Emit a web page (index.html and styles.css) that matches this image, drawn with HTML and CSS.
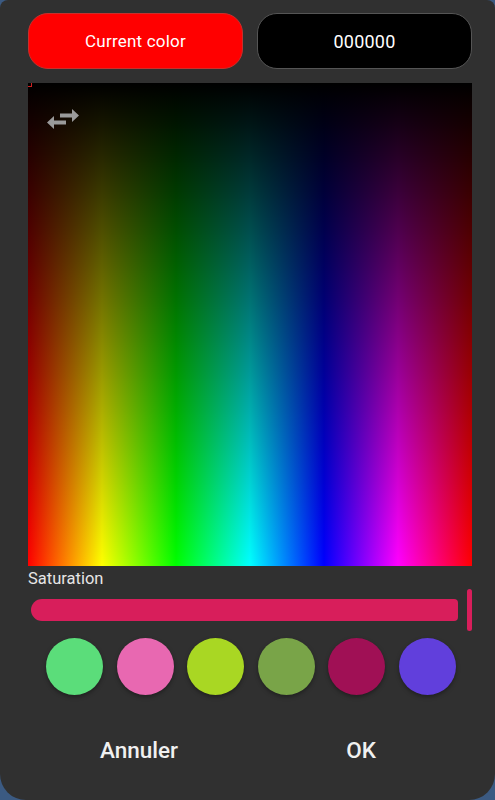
FILE: index.html
```html
<!DOCTYPE html>
<html lang="en">
<head>
    <meta charset="UTF-8">
    <meta name="viewport" content="width=device-width, initial-scale=1.0">
    <title>Color picker</title>
    <link rel="stylesheet" href="styles.css">
</head>
<body>
    <div class="dialog">
        <div class="top-row">
            <button class="chip chip-current">Current color</button>
            <button class="chip chip-hex">000000</button>
        </div>

        <div class="picker">
            <span class="picker-marker"></span>
            <svg class="swap-icon" width="34" height="28" viewBox="0 0 34 28">
                <path d="M14 8.5h12V4l7 6.5-7 6.5v-4.5H14z" fill="#9a9a9a"/>
                <path d="M20 15.5H8V11l-7 6.5 7 6.5v-4.5h12z" fill="#9a9a9a"/>
            </svg>
        </div>

        <span class="slider-label">Saturation</span>
        <div class="slider">
            <div class="slider-track"></div>
            <div class="slider-thumb"></div>
        </div>

        <div class="swatches">
            <span class="swatch swatch-1"></span>
            <span class="swatch swatch-2"></span>
            <span class="swatch swatch-3"></span>
            <span class="swatch swatch-4"></span>
            <span class="swatch swatch-5"></span>
            <span class="swatch swatch-6"></span>
        </div>

        <div class="actions">
            <button class="action">Annuler</button>
            <button class="action">OK</button>
        </div>
    </div>
</body>
</html>
```

FILE: styles.css
```css
/* ===== BASE ===== */
* {
    margin: 0;
    padding: 0;
    box-sizing: border-box;
}

body {
    font-family: Roboto, 'Noto Sans', sans-serif;
    background: #3b5a82;
    color: #f2f2f2;
}

button {
    font-family: inherit;
    border: none;
    background: none;
    color: inherit;
    cursor: pointer;
}

/* ===== DIALOG ===== */
.dialog {
    height: 800px;
    background: #303030;
    border-radius: 8px 8px 26px 26px;
    padding: 13px 23px 0 28px;
    display: flex;
    flex-direction: column;
}

.top-row {
    display: flex;
    gap: 14px;
}

.chip {
    flex: 1;
    height: 56px;
    border-radius: 20px;
    font-size: 17px;
    letter-spacing: 0.2px;
    color: #fff;
}

.chip-current {
    background: #ff0000;
    border: 1px solid #c8302c;
}

.chip-hex {
    background: #000;
    border: 1px solid #555;
    font-size: 18px;
}

/* ===== HUE / VALUE PLANE ===== */
.picker {
    position: relative;
    margin-top: 14px;
    height: 483px;
    background:
        linear-gradient(to bottom, #000 0%, rgba(0, 0, 0, 0) 100%),
        linear-gradient(to right, #f00 0%, #ff0 16.67%, #0f0 33.33%, #0ff 50%, #00f 66.67%, #f0f 83.33%, #f00 100%);
}

.picker-marker {
    position: absolute;
    left: 0;
    top: 0;
    width: 4px;
    height: 4px;
    border-right: 1px solid #d02020;
    border-bottom: 1px solid #d02020;
}

.swap-icon {
    position: absolute;
    left: 18px;
    top: 22px;
}

/* ===== SATURATION SLIDER ===== */
.slider-label {
    margin-top: 3px;
    font-size: 16.5px;
    line-height: 19px;
    color: #e6e6e6;
}

.slider {
    display: flex;
    align-items: center;
    height: 42px;
    margin-top: 1px;
    padding-left: 3px;
    gap: 9px;
}

.slider-track {
    flex: 1;
    height: 22px;
    background: #d81e5b;
    border-radius: 11px 4px 4px 11px;
}

.slider-thumb {
    width: 5px;
    height: 42px;
    background: #d81e5b;
    border-radius: 3px;
}

/* ===== PRESETS ===== */
.swatches {
    display: flex;
    gap: 13.5px;
    margin-top: 7px;
    padding-left: 18px;
}

.swatch {
    width: 57px;
    height: 57px;
    border-radius: 50%;
    box-shadow: 0 2px 4px rgba(0, 0, 0, 0.35);
}

.swatch-1 { background: #5bdd7a; }
.swatch-2 { background: #e868b1; }
.swatch-3 { background: #a9d723; }
.swatch-4 { background: #79a448; }
.swatch-5 { background: #a01055; }
.swatch-6 { background: #613fdc; }

/* ===== ACTIONS ===== */
.actions {
    display: flex;
    margin-top: 37px;
}

.action {
    flex: 1;
    height: 36px;
    font-size: 22.5px;
    font-weight: 500;
    color: #f0f0f0;
}
```
